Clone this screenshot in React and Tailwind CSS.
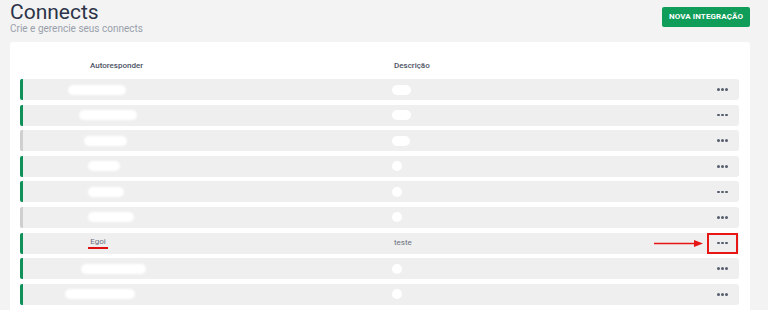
import React from "react";

const rows = [
  { bar: "green", a: [45, 58], d: 19 },
  { bar: "green", a: [56, 58], d: 19 },
  { bar: "gray", a: [61, 43], d: 18 },
  { bar: "green", a: [65, 32], d: 10 },
  { bar: "green", a: [65, 36], d: 10 },
  { bar: "gray", a: [65, 46], d: 10 },
  { bar: "green", egoi: true },
  { bar: "green", a: [58, 65], d: 10 },
  { bar: "green", a: [42, 70], d: 10 },
];

function Dots() {
  return (
    <div className="flex items-center gap-[1.5px]">
      <span className="block w-[2.5px] h-[2.5px] rounded-full bg-[#555c6a]" />
      <span className="block w-[2.5px] h-[2.5px] rounded-full bg-[#555c6a]" />
      <span className="block w-[2.5px] h-[2.5px] rounded-full bg-[#555c6a]" />
    </div>
  );
}

function Row({ r }) {
  return (
    <div className="h-[21px] rounded-[3px] bg-[#efefef] flex items-stretch">
      <div className={"w-[3px] rounded-l-[2px] " + (r.bar === "green" ? "bg-[#10915a]" : "bg-[#cfcfcf]")} />
      <div className="w-[369px] flex items-center">
        {r.egoi ? (
          <div className="ml-[65px] flex flex-col items-center">
            <span className="text-[8px] leading-[10px] text-[#6b7280] px-[1px]">Egoi</span>
            <span className="w-[20px] h-[1.5px] bg-[#e01010]" />
          </div>
        ) : (
          <span
            className="h-[10px] rounded-full bg-white blur-[1px]"
            style={{ marginLeft: r.a[0], width: r.a[1] }}
          />
        )}
      </div>
      <div className="flex-1 flex items-center">
        {r.egoi ? (
          <span className="ml-[2px] text-[8px] leading-[10px] text-[#6b7280]">teste</span>
        ) : (
          <span className="h-[10px] rounded-full bg-white blur-[0.5px]" style={{ width: r.d }} />
        )}
        {r.egoi && (
          <svg className="ml-auto mr-[3px]" width="50" height="9" viewBox="0 0 50 9">
            <line x1="0" y1="4.5" x2="42" y2="4.5" stroke="#e81515" strokeWidth="1.5" />
            <polygon points="40,1 49,4.5 40,8" fill="#e81515" />
          </svg>
        )}
      </div>
      <div
        className={
          "w-[31px] mr-[1px] flex items-center justify-center " +
          (r.egoi ? "border-2 border-[#e81515]" : "")
        }
      >
        <Dots />
      </div>
    </div>
  );
}

export default function App() {
  return (
    <div
      className="w-[768px] h-[310px] overflow-hidden bg-[#f3f3f3]"
      style={{ fontFamily: "Roboto, 'Liberation Sans', sans-serif" }}
    >
      <div className="flex justify-between items-start pl-[10px] pr-[18px]">
        <div>
          <h1 className="text-[21px] leading-[22px] text-[#2c3349] font-normal mt-[1px]">Connects</h1>
          <p className="text-[10px] leading-[12px] text-[#9aa0ab]">Crie e gerencie seus connects</p>
        </div>
        <button className="mt-[7px] h-[20px] w-[88px] rounded-[2px] bg-[#109d59] text-white text-[8px] font-bold tracking-[0.1px] flex items-center justify-center">
          NOVA INTEGRAÇÃO
        </button>
      </div>

      <div className="ml-[10px] mr-[18px] mt-[7px] bg-white rounded-[3px] h-[300px] pl-[10px] pr-[11px] pt-[19px]">
        <div className="flex h-[18px] text-[8px] leading-[10px] font-medium text-[#4a5163]">
          <span className="w-[372px] pl-[70px]">Autoresponder</span>
          <span className="pl-[2px]">Descrição</span>
        </div>
        <div className="flex flex-col gap-[4.6px]">
          {rows.map((r, i) => (
            <Row key={i} r={r} />
          ))}
        </div>
      </div>
    </div>
  );
}
